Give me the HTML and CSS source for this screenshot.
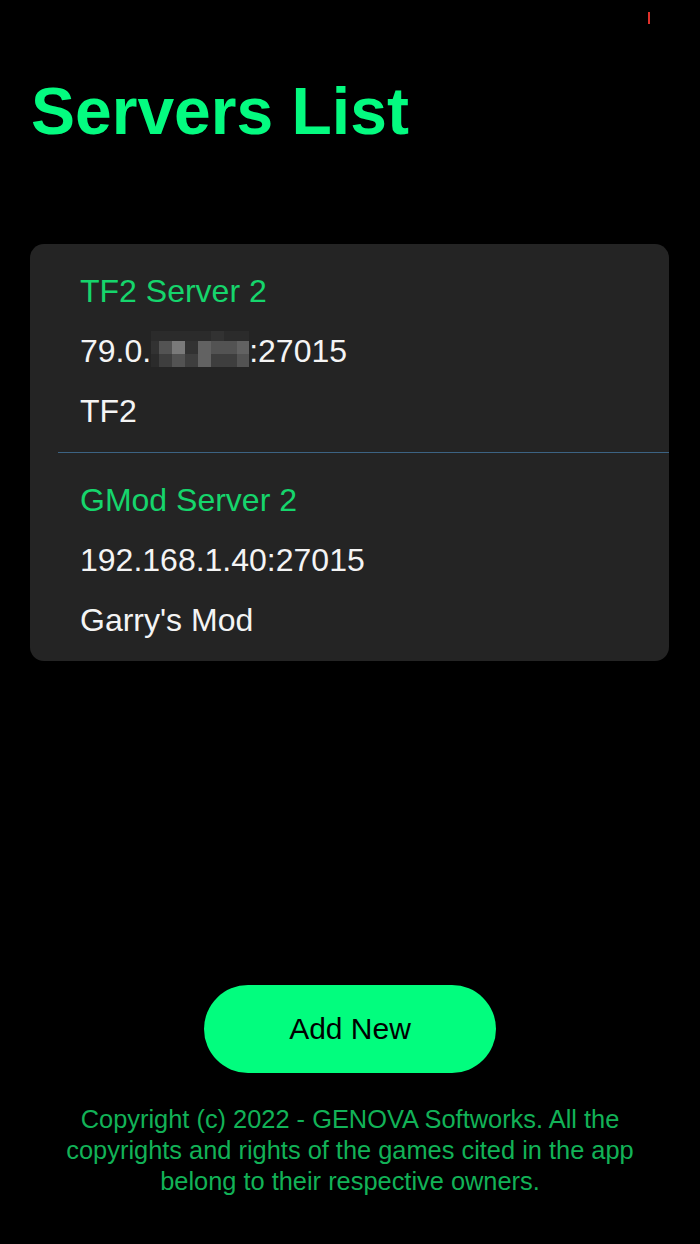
FILE: index.html
```html
<!DOCTYPE html>
<html lang="en">
<head>
  <meta charset="UTF-8" />
  <title>Servers List</title>
  <link rel="stylesheet" href="styles.css">
</head>
<body>
  <div class="status-tick"></div>

  <main class="content">
    <h1>Servers List</h1>

    <div class="server-card">
      <div class="server-item">
        <div class="server-name">TF2 Server 2</div>
        <div class="server-row">79.0.<span class="mosaic-wrap"><span class="mosaic">
            <i class="s1"></i><i class="s1"></i><i class="s1"></i><i class="s1"></i><i class="s1"></i><i class="s2"></i><i class="s1"></i><i class="s1"></i>
            <i class="s2"></i><i class="s4"></i><i class="s6"></i><i class="s2"></i><i class="s5"></i><i class="s4"></i><i class="s4"></i><i class="s5"></i>
            <i class="s1"></i><i class="s3"></i><i class="s4"></i><i class="s3"></i><i class="s5"></i><i class="s3"></i><i class="s3"></i><i class="s4"></i>
          </span></span>:27015</div>
        <div class="server-row">TF2</div>
      </div>
      <div class="server-item">
        <div class="server-name">GMod Server 2</div>
        <div class="server-row">192.168.1.40:27015</div>
        <div class="server-row">Garry's Mod</div>
      </div>
    </div>
  </main>

  <footer class="bottom">
    <button class="add-btn">Add New</button>
    <p class="copyright">Copyright (c) 2022 - GENOVA Softworks. All the copyrights and rights of the games cited in the app belong to their respective owners.</p>
  </footer>
</body>
</html>
```

FILE: styles.css
```css
html, body {
  margin: 0;
  padding: 0;
}

body {
  background: #000;
  color: #fff;
  font-family: "Liberation Sans", Arial, Helvetica, sans-serif;
  min-height: 100vh;
  display: flex;
  flex-direction: column;
  position: relative;
}

.status-tick {
  position: absolute;
  left: 648px;
  top: 12px;
  width: 2px;
  height: 12px;
  background: #e0302a;
}

.content {
  padding: 0 31px 0 30px;
}

h1 {
  margin: 78px 0 0 1px;
  font-size: 66px;
  line-height: 67px;
  font-weight: bold;
  color: #04fb80;
}

.server-card {
  margin-top: 99px;
  background: #242424;
  border-radius: 14px;
  overflow: hidden;
}

.server-item {
  margin-left: 28px;
  padding: 17px 0 11px 22px;
}

.server-item + .server-item {
  border-top: 1px solid #3c6383;
}

.server-name,
.server-row {
  font-size: 32px;
  line-height: 60px;
  white-space: nowrap;
}

.server-name {
  color: #16d56c;
}

.server-row {
  color: #f4f4f4;
}

/* blurred part of the address */
.mosaic-wrap {
  display: inline-block;
  overflow: hidden;
  vertical-align: -5px;
  line-height: 0;
}

.mosaic {
  display: grid;
  grid-template-columns: 8px repeat(6, 13px) 12px;
  grid-template-rows: 10px 13px 13px;
}

.mosaic i { display: block; }
.mosaic .s1 { background: #2b2b2b; }
.mosaic .s2 { background: #323232; }
.mosaic .s3 { background: #3e3e3e; }
.mosaic .s4 { background: #535353; }
.mosaic .s5 { background: #626262; }
.mosaic .s6 { background: #7a7a7a; }

.bottom {
  margin-top: auto;
  display: flex;
  flex-direction: column;
  align-items: center;
  padding-bottom: 47px;
}

.add-btn {
  width: 292px;
  height: 88px;
  border: none;
  border-radius: 44px;
  background: #02fd7e;
  color: #000;
  font-family: inherit;
  font-size: 30px;
  cursor: pointer;
}

.copyright {
  margin: 31px 0 0;
  width: 590px;
  text-align: center;
  font-size: 25.4px;
  line-height: 31px;
  color: #12b257;
}
```
